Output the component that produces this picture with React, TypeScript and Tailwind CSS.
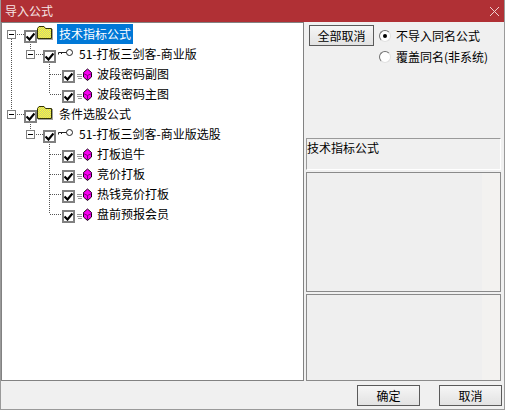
import React from "react"

const cjk = { fontFamily: '"Noto Sans CJK SC", "Liberation Sans", sans-serif' }

// Dotted connector lines and expander box for a tree row
function Guide({ width, dots, box }: { width: number; dots: string; box?: number }) {
  return (
    <svg width={width} height={20} className="shrink-0">
      <path d={dots} stroke="#555555" strokeWidth={1} strokeDasharray="1 1" fill="none" />
      {box !== undefined && (
        <g>
          <rect x={box + 0.5} y={6.5} width={8} height={8} fill="#ffffff" stroke="#808080" />
          <path d={`M${box + 2} 10.5H${box + 7}`} stroke="#000000" />
        </g>
      )}
    </svg>
  )
}

function Check() {
  return (
    <div className="shrink-0 w-[13px] h-[13px] mt-[6px] border-2 border-[#808080] bg-white flex items-center justify-center">
      <svg width={9} height={9} viewBox="0 0 9 9">
        <path d="M0.5 4.5L3.5 7.5L8.5 1.5" stroke="#000000" strokeWidth={2.2} fill="none" />
      </svg>
    </div>
  )
}

function Folder({ id }: { id: string }) {
  return (
    <svg width={16} height={15} viewBox="0 0 16 15" className="shrink-0 mt-[2px] self-start">
      <defs>
        <pattern id={id} width={2} height={2} patternUnits="userSpaceOnUse">
          <rect width={2} height={2} fill="#ffff33" />
          <rect width={1} height={1} fill="#c8c880" />
          <rect x={1} y={1} width={1} height={1} fill="#c8c880" />
        </pattern>
      </defs>
      <path d="M0.5 12.5V2.5L2 0.5H7L8.5 2.5H14.5V12.5Z" fill={`url(#${id})`} stroke="#333300" />
      <path d="M1 13H15.5V14H1ZM15 3H16V14H15Z" fill="#a0a0a0" />
    </svg>
  )
}

function KeyIcon() {
  return (
    <svg width={16} height={10} viewBox="0 0 16 10" className="shrink-0 ml-[2px]">
      <circle cx={11.5} cy={3.5} r={3} fill="#ffffff" stroke="#222222" />
      <path d="M0.5 3.5H8.5M0.5 3.5V5.5M3.5 3.5V5" stroke="#222222" fill="none" />
    </svg>
  )
}

function GemIcon() {
  return (
    <svg width={15} height={14} viewBox="0 0 15 14" className="shrink-0 ml-[2px] mt-[2px]">
      <path d="M0 6.5H5M0 8.5H5M1 10.5H5" stroke="#999999" />
      <path d="M10.5 1L14.5 4.5V9L10.5 12.5L6.5 9V4.5Z" fill="#f800f0" stroke="#1a001a" />
      <path d="M6.5 5.5L10.5 7.5L14.5 5.5M10.5 7.5V12" stroke="#800080" fill="none" />
    </svg>
  )
}

type Row = {
  width: number
  dots: string
  box?: number
  icon: "folder" | "key" | "gem"
  label: string
  selected?: boolean
}

const rows: Row[] = [
  { width: 20, dots: "M7.5 15V20M13 10.5H20M26.5 19V20", box: 3, icon: "folder", label: "技术指标公式", selected: true },
  { width: 39, dots: "M7.5 0V20M26.5 0V6M32 10.5H39", box: 22, icon: "key", label: "51-打板三剑客-商业版" },
  { width: 58, dots: "M7.5 0V20M45.5 0V20M46 10.5H58", icon: "gem", label: "波段密码副图" },
  { width: 58, dots: "M7.5 0V20M45.5 0V10M46 10.5H58", icon: "gem", label: "波段密码主图" },
  { width: 20, dots: "M7.5 0V6M13 10.5H20", box: 3, icon: "folder", label: "条件选股公式" },
  { width: 39, dots: "M26.5 0V6M32 10.5H39", box: 22, icon: "key", label: "51-打板三剑客-商业版选股" },
  { width: 58, dots: "M45.5 0V20M46 10.5H58", icon: "gem", label: "打板追牛" },
  { width: 58, dots: "M45.5 0V20M46 10.5H58", icon: "gem", label: "竞价打板" },
  { width: 58, dots: "M45.5 0V20M46 10.5H58", icon: "gem", label: "热钱竞价打板" },
  { width: 58, dots: "M45.5 0V10M46 10.5H58", icon: "gem", label: "盘前预报会员" },
]

function TreeRow({ row }: { row: Row }) {
  return (
    <div className="flex h-5 items-center whitespace-nowrap">
      <Guide width={row.width} dots={row.dots} box={row.box} />
      <div className="self-start flex">
        <Check />
      </div>
      {row.icon === "folder" && <Folder id={`dither-${row.label[0]}`} />}
      {row.icon === "key" && <KeyIcon />}
      {row.icon === "gem" && <GemIcon />}
      <span
        className={`${row.icon === "folder" ? "ml-[4px]" : "ml-[3px]"} px-[2px] h-5 leading-5 text-xs ${row.selected ? "bg-[#0078d7] text-white" : "text-black"}`}
      >
        {row.label}
      </span>
    </div>
  )
}

function Radio({ on, label }: { on?: boolean; label: string }) {
  return (
    <div className="flex items-center h-[21px]">
      <div className="w-[12px] h-[12px] rounded-full bg-white border border-t-[#707070] border-l-[#707070] border-b-[#e0e0e0] border-r-[#e0e0e0] flex items-center justify-center">
        {on && <div className="w-[4px] h-[4px] rounded-full bg-black" />}
      </div>
      <span className="ml-[5px] text-xs text-black whitespace-nowrap">{label}</span>
    </div>
  )
}

function Button({ label, className }: { label: string; className: string }) {
  return (
    <div
      className={`h-[21px] flex items-center justify-center border border-[#5a5a5a] bg-gradient-to-b from-[#f6f6f6] to-[#e2e2e2] text-xs text-black ${className}`}
    >
      {label}
    </div>
  )
}

function Panel({ className }: { className: string }) {
  return (
    <div className={`border border-[#8a8a8a] flex bg-[#efefef] ${className}`}>
      <div className="flex-1" />
      <div className="w-[18px] bg-[#f3f2f0]" />
    </div>
  )
}

export default function App() {
  return (
    <div
      className="w-[505px] h-[410px] bg-[#f0f0f0] flex flex-col border-x border-b border-[#9a9a9a] overflow-hidden"
      style={cjk}
    >
      <div className="h-[22px] shrink-0 -mx-px bg-[#b03035] flex items-center justify-between pl-[5px] pr-[5px]">
        <span className="text-xs text-[#f6e6e6]">导入公式</span>
        <svg width={11} height={11} viewBox="0 0 11 11">
          <path d="M1 1L10 10M10 1L1 10" stroke="#f0d0d0" strokeWidth={1} />
        </svg>
      </div>

      <div className="flex h-[359px] shrink-0">
        <div className="w-[303px] border border-[#828282] bg-white pt-px pl-[2px] overflow-hidden">
          {rows.map((row) => (
            <TreeRow key={row.label} row={row} />
          ))}
        </div>

        <div className="w-[195px] ml-[2px] flex flex-col">
          <div className="flex items-start pt-[3px] pl-[3px]">
            <Button label="全部取消" className="w-[65px]" />
            <div className="ml-[5px] flex flex-col">
              <Radio on label="不导入同名公式" />
              <Radio label="覆盖同名(非系统)" />
            </div>
          </div>
          <div className="mt-[71px] h-[32px] border-t border-l border-[#9a9a9a] border-b border-r border-b-white border-r-white text-xs leading-[18px] text-black">
            技术指标公式
          </div>
          <Panel className="mt-[2px] h-[120px]" />
          <Panel className="mt-[2px] h-[87px]" />
        </div>
      </div>

      <div className="flex justify-end pt-[4px] pr-[2px] gap-[19px]">
        <Button label="确定" className="w-[63px]" />
        <Button label="取消" className="w-[63px]" />
      </div>
    </div>
  )
}
